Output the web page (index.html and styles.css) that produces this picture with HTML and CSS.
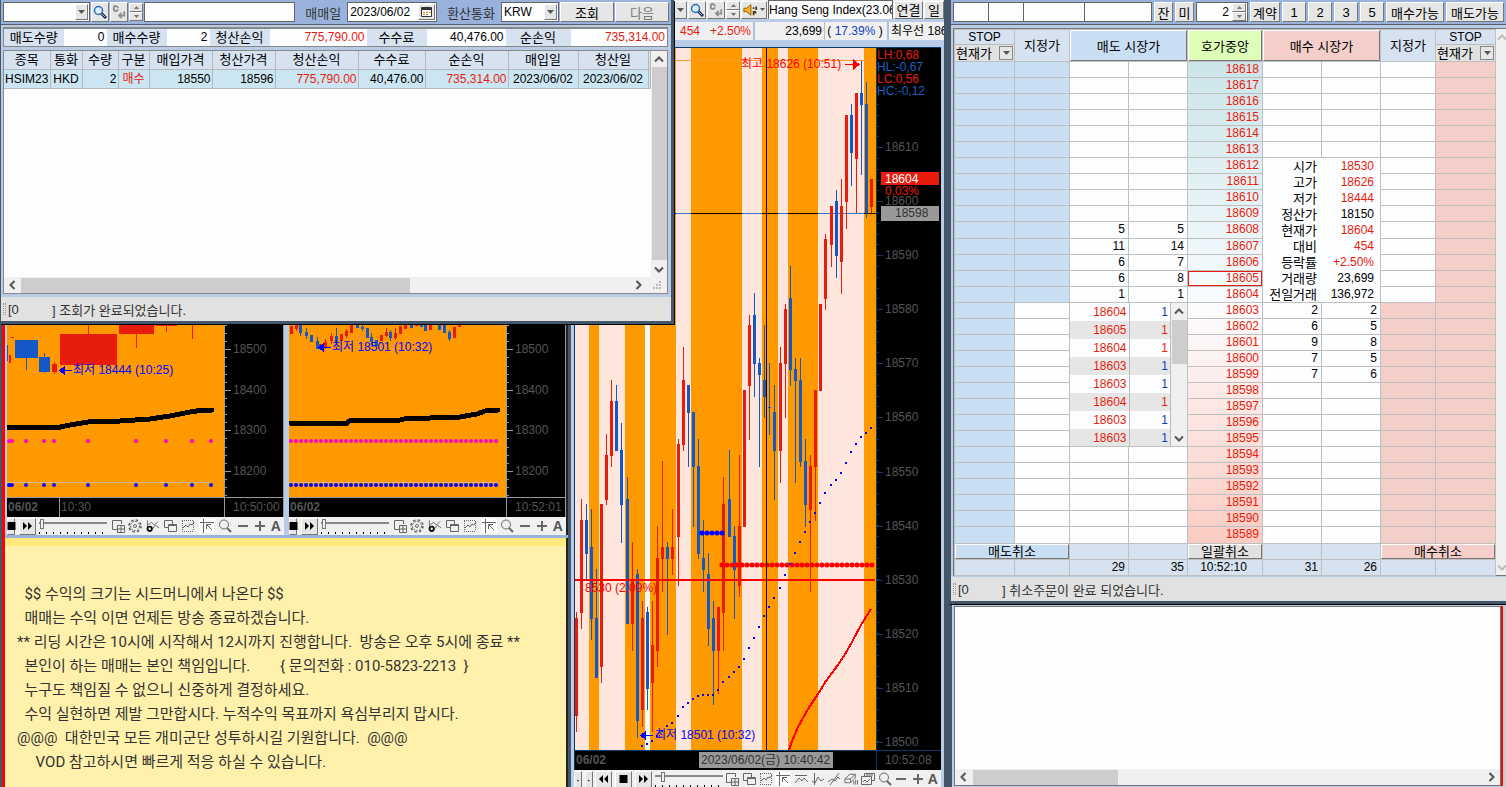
FILE: index.html
```html
<!DOCTYPE html>
<html lang="ko">

<head>
    <meta charset="UTF-8" />
    <meta name="viewport" content="width=device-width, initial-scale=1.0" />
    <title>해외선물 주문</title>
    <link rel="stylesheet" href="styles.css">
</head>

<body>
    <svg class="sprite" aria-hidden="true">
        <symbol id="i-down" viewBox="0 0 7 4"><path d="M0 0h7L3.5 4z" fill="currentColor" /></symbol>
        <symbol id="i-up" viewBox="0 0 7 4"><path d="M0 4h7L3.5 0z" fill="currentColor" /></symbol>
        <symbol id="i-find" viewBox="0 0 14 14">
            <path d="M8 8l5 5" stroke="#0a2a6a" stroke-width="3" />
            <path d="M9 9l3 3" stroke="#e8c060" />
            <circle cx="5.5" cy="5.5" r="4" fill="#d8f0ff" stroke="#2f6fb5" stroke-width="1.5" />
        </symbol>
        <symbol id="i-enter" viewBox="0 0 16 16">
            <path d="M7 3.500Q6 1 4 1T2 4t2 3 3-2M14 7v5H8m3-3l-3 3 3 3" fill="none" stroke="#8c8c8c" stroke-width="2" />
        </symbol>
        <symbol id="i-sound" viewBox="0 0 17 14">
            <path d="M1 5h3l5-4v12L4 9H1z" fill="#f5b21c" stroke="#8a5a00" />
            <path d="M11 4h2v2h-2zm3-1h2v4h-2zM11 8h4v3h-2v2h-2z" fill="#5a3a10" />
        </symbol>
        <symbol id="i-cal" viewBox="0 0 11 10">
            <path d="M.5.5h10v9H.5z" fill="#fff" stroke="#333" />
            <path d="M1 2h9" stroke="#333" stroke-width="2" />
            <path d="M2 5.500h2m1 0h2m1 0h1.500M2 7.500h2m1 0h2" stroke="#e08a20" />
        </symbol>
        <symbol id="i-ff" viewBox="0 0 9 8"><path d="M0 0l4 4-4 4zM5 0l4 4-4 4z" /></symbol>
        <symbol id="i-rew" viewBox="0 0 9 8"><path d="M4 0L0 4l4 4zM9 0L5 4l4 4z" /></symbol>
        <symbol id="i-stop" viewBox="0 0 6 6"><path d="M0 0h6v6H0z" /></symbol>
        <symbol id="i-add" viewBox="0 0 14 14">
            <path d="M6 10.500H1.500v-9h9V5" />
            <path d="M6.500 6.500h7v7h-7zM10 7v6M7 10h6" />
        </symbol>
        <symbol id="i-gear" viewBox="0 0 14 14">
            <circle cx="7" cy="7" r="6" stroke-dasharray="2.500 2.200" stroke-width="1.600" />
            <circle cx="7" cy="7" r="4.500" stroke-dasharray="2 1" />
            <circle cx="7" cy="7" r="1.500" />
        </symbol>
        <symbol id="i-set" viewBox="0 0 15 14">
            <path d="M1.500 1v11M2 6l4-3 3 3 4-4M7 10l3-4 4 3" />
            <circle cx="4" cy="10" r="2.300" stroke="#111" stroke-width="2" />
        </symbol>
        <symbol id="i-wins" viewBox="0 0 14 14">
            <path d="M5 8.500H1.500v-7h8V5M5.500 5.500h8v7h-8zM5 6.500h9" />
        </symbol>
        <symbol id="i-dash" viewBox="0 0 14 14">
            <path d="M1 1.500h12M1 12.500h12M1.500 2v10M12.500 2v10" stroke-dasharray="1 1" />
            <path d="M2 9l3-3 2 2 2-3 2 1 2-3" />
        </symbol>
        <symbol id="i-cross" viewBox="0 0 14 14">
            <path d="M0 3.500h14M3.500 0v14M12 11L6.500 5.500M6.500 10V5.500H11" />
        </symbol>
        <symbol id="i-trend" viewBox="0 0 14 14"><path d="M1 3.500h12M1 11l4-5 3 3 2-3 4 4" /></symbol>
        <symbol id="i-wave" viewBox="0 0 14 14"><path d="M3.500 1v12M1 9l3 2 3-6 3 4 3-2" /></symbol>
        <symbol id="i-slash" viewBox="0 0 14 14"><path d="M3 13L12 1M1 10l4-3 3 2 3-4 2 2" /></symbol>
        <symbol id="i-erase" viewBox="0 0 15 14">
            <path d="M1 7l5-5h6L7 7zM1 7v4h6V7M7 11l5-5V2M10.500 9v4M12.500 8v5M14.500 8v5" />
        </symbol>
        <symbol id="i-multi" viewBox="0 0 14 14">
            <path d="M3.500 4V1.500h10v7H11M.5 4.500h10v8H.5zM2 10l2-2 2 2 3-3M5 3l2 0 2 0 3 0" />
        </symbol>
        <symbol id="i-lens" viewBox="0 0 14 14"><circle cx="6" cy="5.500" r="4.500" /><path d="M9 9l4 4" stroke-width="2" /></symbol>
        <symbol id="i-minus" viewBox="0 0 14 14"><path d="M2 7h10" stroke-width="2" /></symbol>
        <symbol id="i-plus" viewBox="0 0 14 14"><path d="M2 7h10M7 2v10" stroke-width="2" /></symbol>
    </svg>

    <main class="desktop">
        <div class="col-left">
            <section class="win query">
                <form class="bar">
                    <span class="combo acct"><input type="text" aria-label="계좌"><button type="button" class="btn dd" aria-label="목록"><svg><use href="#i-down" /></svg></button></span>
                    <button type="button" class="btn ico" aria-label="검색"><svg><use href="#i-find" /></svg></button>
                    <button type="button" class="btn ico" aria-label="입력"><svg><use href="#i-enter" /></svg></button>
                    <span class="spin"><button type="button" class="btn" aria-label="위"><svg><use href="#i-up" /></svg></button><button type="button" class="btn" aria-label="아래"><svg><use href="#i-down" /></svg></button></span>
                    <input type="text" class="box grow" aria-label="계좌명">
                    <label for="day">매매일</label>
                    <span class="combo day"><input type="text" id="day" value="2023/06/02"><button type="button" class="btn cal" aria-label="달력"><svg><use href="#i-cal" /></svg></button></span>
                    <label for="cur">환산통화</label>
                    <span class="combo cur"><select id="cur"><option>KRW</option></select><span class="btn dd"><svg><use href="#i-down" /></svg></span></span>
                    <button type="submit" class="btn wide">조회</button>
                    <button type="button" class="btn wide off">다음</button>
                </form>
                <div class="query-body">
                    <table class="summary">
                        <colgroup><col class="w60"><col class="w43"><col class="w60"><col class="w43"><col class="w60"><col class="w97"><col class="w60"><col class="w79"><col class="w65"><col class="w97"></colgroup>
                        <tr>
                            <th>매도수량</th><td>0</td>
                            <th>매수수량</th><td>2</td>
                            <th>청산손익</th><td class="up">775,790.00</td>
                            <th>수수료</th><td>40,476.00</td>
                            <th>순손익</th><td class="up">735,314.00</td>
                        </tr>
                    </table>
                    <div class="grid-box">
                        <div class="grid-main">
                            <table class="trades">
                                <colgroup><col class="w46"><col class="w32"><col class="w36"><col class="w31"><col class="w63"><col class="w63"><col class="w83"><col class="w67"><col class="w83"><col class="w70"><col class="w70"><col></colgroup>
                                <thead>
                                    <tr><th>종목</th><th>통화</th><th>수량</th><th>구분</th><th>매입가격</th><th>청산가격</th><th>청산손익</th><th>수수료</th><th>순손익</th><th>매입일</th><th>청산일</th><th></th></tr>
                                </thead>
                                <tbody>
                                    <tr><td class="mid">HSIM23</td><td class="mid">HKD</td><td>2</td><td class="mid up">매수</td><td>18550</td><td>18596</td><td class="up">775,790.00</td><td>40,476.00</td><td class="up">735,314.00</td><td class="mid">2023/06/02</td><td class="mid">2023/06/02</td><td></td></tr>
                                </tbody>
                            </table>
                            <div class="vbar"><svg class="chev" viewBox="0 0 8 5"><path d="M0 4.500l4-4 4 4" /></svg><i class="thumb"></i><svg class="chev" viewBox="0 0 8 5"><path d="M0 .5l4 4 4-4" /></svg></div>
                        </div>
                        <div class="hbar"><svg class="chev side" viewBox="0 0 5 8"><path d="M4.500 0l-4 4 4 4" /></svg><i class="thumb"></i><svg class="chev side" viewBox="0 0 5 8"><path d="M.5 0l4 4-4 4" /></svg><svg class="grip" viewBox="0 0 8 8"><path d="M6 0h2v2H6zM3 3h2v2H3zM6 3h2v2H6zM0 6h2v2H0zM3 6h2v2H3zM6 6h2v2H6z" /></svg></div>
                    </div>
                </div>
                <div class="status"><i></i><span>[0</span><span>] 조회가 완료되었습니다.</span></div>
            </section>

            <div class="mini-row">
                <section class="mini">
                    <svg class="chart" viewBox="7 323 277 193">
                        <rect class="back" x="7" y="323" width="277" height="193" />
                        <rect class="or" x="7" y="323" width="217" height="173" />
                        <path class="frame" d="M224.500 323V516M7 496.500H284M59.500 496V516M283.500 323V516" />
                        <path class="frame" d="M225 348.500h6M225 389.500h6M225 429.500h6M225 470.500h6" />
                        <path class="ticks" stroke-dasharray="1 7.100" d="M226 324V496" />
                        <g class="red">
                            <path class="fill" d="M9 354h2v8H9zM11 336h3v1h-3zM52 363h5v8h-5zM60 333h57v31H60zM119 323h35v10h-35zM156 323h21v2h-21z" />
                            <path d="M54.500 361v12M88.500 323v10M136.500 333v14M166.500 325v6M192.500 323v15" />
                        </g>
                        <g class="blue">
                            <path class="fill" d="M7 344h1v16H7zM15 339h23v18H15zM39 356h11v15H39z" />
                            <path d="M26.500 357v12M44.500 352v20" />
                        </g>
                        <path class="pale" d="M7 481.500H211" />
                        <path class="avg" d="M7 426.500H58L70 424 88 421 120 420 150 418 170 415 190 411 203 409H212" />
                        <path class="dots mag" d="M9 440h0M12 440h0M26 440h0M44 440h0M54 440h0M88 440h0M136 440h0M166 440h0M192 440h0M211 440h0" />
                        <path class="dots blu" d="M9 484h0M12 484h0M26 484h0M44 484h0M54 484h0M88 484h0M136 484h0M166 484h0M192 484h0M211 484h0" />
                        <path class="arrow" d="M59 369.500l6-5v4.500h7v1h-7v4.500z" />
                        <text class="low" x="73" y="373">최저 18444 (10:25)</text>
                        <text x="233" y="352">18500</text>
                        <text x="233" y="393">18400</text>
                        <text x="233" y="433">18300</text>
                        <text x="233" y="474">18200</text>
                        <text class="bold" x="8" y="510">06/02</text>
                        <text x="61" y="510">10:30</text>
                        <text x="233" y="510">10:50:00</text>
                    </svg>
                    <div class="tools">
                        <button class="btn half" aria-label="정지"><svg><use href="#i-stop" /></svg></button>
                        <button class="btn" aria-label="빨리"><svg><use href="#i-ff" /></svg></button>
                        <input type="range" value="2" aria-label="속도">
                        <svg><use href="#i-add" /></svg><svg><use href="#i-gear" /></svg><svg><use href="#i-set" /></svg><svg><use href="#i-wins" /></svg><svg><use href="#i-dash" /></svg><svg class="on"><use href="#i-cross" /></svg><svg><use href="#i-lens" /></svg><svg><use href="#i-minus" /></svg><svg><use href="#i-plus" /></svg><b>A</b>
                    </div>
                </section>
                <section class="mini">
                    <svg class="chart" viewBox="289 323 277 193">
                        <rect class="back" x="289" y="323" width="277" height="193" />
                        <rect class="or" x="289" y="323" width="217" height="173" />
                        <path class="frame" d="M506.500 323V516M289 496.500H566M565.500 323V516" />
                        <path class="frame" d="M507 348.500h6M507 389.500h6M507 429.500h6M507 470.500h6" />
                        <path class="ticks" stroke-dasharray="1 7.100" d="M508 324V496" />
                        <g class="red">
                            <path class="body" d="M291.500 325v8M296.500 323v5M320.500 343v4M325.500 341v5M331.500 335v5M341.500 333v7M346.500 330v5M351.500 323v9M381.500 334v6M386.500 331v4M395.500 332v5M400.500 325v8M405.500 323v5M416.500 323v2M430.500 323v6M454.500 326v11M459.500 323v3" />
                            <path d="M325.500 338v10M331.500 332v11M346.500 328v9M386.500 327v9M395.500 327v12M296.500 323v7" />
                        </g>
                        <g class="blue">
                            <path class="body" d="M300.500 323v9M306.500 331v4M311.500 334v7M317.500 340v8M336.500 335v7M357.500 323v4M362.500 326v2M367.500 327v10M371.500 336v5M376.500 339v6M390.500 331v6M411.500 323v4M421.500 323v3M425.500 323v7M439.500 323v6M444.500 324v8M449.500 331v7" />
                            <path d="M300.500 323v12M306.500 327v11M317.500 336v12M336.500 327v17M362.500 323v7M371.500 332v12M390.500 329v11M449.500 329v11" />
                        </g>
                        <path class="pale" d="M289 481.500H498" />
                        <path class="avg" d="M290 422H347L351 419H400L404 418 430 417 460 416 477 413 485 410 498 409" />
                        <path class="dots mag" stroke-dasharray="0 5" d="M291 440H499" />
                        <path class="dots blu" stroke-dasharray="0 5" d="M291 484H499" />
                        <path class="arrow" d="M318 346.500l6-5v4.500h7v1h-7v4.500z" />
                        <text class="low" x="332" y="350">최저 18501 (10:32)</text>
                        <text x="515" y="352">18500</text>
                        <text x="515" y="393">18400</text>
                        <text x="515" y="433">18300</text>
                        <text x="515" y="474">18200</text>
                        <text class="bold" x="290" y="510">06/02</text>
                        <text x="515" y="510">10:52:01</text>
                    </svg>
                    <div class="tools">
                        <button class="btn half" aria-label="정지"><svg><use href="#i-stop" /></svg></button>
                        <button class="btn" aria-label="빨리"><svg><use href="#i-ff" /></svg></button>
                        <input type="range" value="2" aria-label="속도">
                        <svg><use href="#i-add" /></svg><svg><use href="#i-gear" /></svg><svg><use href="#i-set" /></svg><svg><use href="#i-wins" /></svg><svg><use href="#i-dash" /></svg><svg class="on"><use href="#i-cross" /></svg><svg><use href="#i-lens" /></svg><svg><use href="#i-minus" /></svg><svg><use href="#i-plus" /></svg><b>A</b>
                    </div>
                </section>
            </div>

            <section class="note">
                <div class="note-text">  $$ 수익의 크기는 시드머니에서 나온다 $$
  매매는 수익 이면 언제든 방송 종료하겠습니다.
** 리딩 시간은 10시에 시작해서 12시까지 진행합니다.  방송은 오후 5시에 종료 **
  본인이 하는 매매는 본인 책임입니다.        { 문의전화 : 010-5823-2213  }
  누구도 책임질 수 없으니 신중하게 결정하세요.
  수익 실현하면 제발 그만합시다. 누적수익 목표까지 욕심부리지 맙시다.
@@@  대한민국 모든 개미군단 성투하시길 기원합니다.  @@@
     VOD 참고하시면 빠르게 적응 하실 수 있습니다.</div>
            </section>
        </div>

        <section class="win center">
            <div class="sym">
                <button class="btn dd" aria-label="목록"><svg><use href="#i-down" /></svg></button>
                <button class="btn ico" aria-label="검색"><svg><use href="#i-find" /></svg></button>
                <button class="btn ico" aria-label="입력"><svg><use href="#i-enter" /></svg></button>
                <span class="spin"><button class="btn" aria-label="위"><svg><use href="#i-up" /></svg></button><button class="btn" aria-label="아래"><svg><use href="#i-down" /></svg></button></span>
                <button class="btn snd" aria-label="소리"><svg><use href="#i-sound" /></svg><svg class="tiny"><use href="#i-down" /></svg></button>
                <input type="text" class="box grow" value="Hang Seng Index(23.06)" aria-label="종목명">
                <button class="btn link">연결</button>
                <button class="btn day1">일</button>
            </div>
            <div class="quote">
                <span class="q1 up">454</span><span class="q2 up">+2.50%</span><span class="q3">23,699</span><span class="q4">( <em>17.39%</em> )</span><span class="q5">최우선 18604</span>
            </div>
            <div class="chart-wrap">
                <svg class="chart main" viewBox="574 47 367 723">
                    <rect class="back" x="574" y="47" width="367" height="723" />
                    <rect class="cream" x="574" y="47" width="302" height="703" />
                    <path class="or" d="M589 47h10v703h-10zM625 47h51v703h-51zM691 47h51v703h-51zM762 47h16v703h-16zM788 47h30v703h-30zM864 47h12v703h-12z" />
                    <path fill="#eefafa" d="M645 47h5v703h-5z" />
                    <path stroke="#ff9933" d="M574 60.500H876" />
                    <path stroke="#200000" d="M574 213.500H876" />
                    <path stroke="#3c78c8" d="M676 213.500h15M742 213.500h20M778 213.500h10M818 213.500h46" />
                    <g class="red" transform="translate(.5 0)">
                        <path d="M576 612V732M581 499V629M601 504V683M606 434V505M611 380V467M632 542V651M642 601V727M652 601V732M657 526V667M662 461V592M672 509V575M678 439V586M683 347V451M718 607V694M723 477V651M739 455V597M749 315V440M780 347V483M785 304V418M810 455V592M815 390V521M825 234V310M831 206V267M841 179V294M846 115V229M856 93V213M871 179V213" />
                        <path class="body" d="M576 618V716M581 520V613M601 504V667M606 455V500M611 401V456M632 580V624M642 618V710M652 645V683M657 558V651M662 547V559M672 547V559M678 444V537M683 380V445M718 607V651M723 504V613M739 526V586M744 390V527M749 325V386M780 363V451M785 309V364M810 466V510M815 390V467M820 304V391M825 239V299M831 206V245M841 206V262M846 115V202M856 93V159M871 179V207" />
                    </g>
                    <g class="blue" transform="translate(.5 0)">
                        <path d="M586 504V580M591 509V640M596 569V678M616 385V451M621 423V543M627 477V624M637 569V738M647 607V710M667 542V635M688 385V467M693 412V527M698 439V559M703 520V592M708 553V646M713 601V705M729 450V537M734 526V619M754 293V397M759 358V467M764 325V418M769 363V435M774 385V500M790 266V386M795 358V483M800 358V467M805 439V527M836 190V278M851 104V186M861 61V175M866 82V218" />
                        <path class="body" d="M586 520V554M591 547V619M596 618V678M616 401V451M621 450V505M627 499V624M637 574V721M647 612V689M667 547V559M688 385V413M693 412V467M698 466V554M703 558V570M708 574V629M713 618V651M729 499V537M734 536V570M754 315V364M759 363V375M764 380V397M769 407V408M774 412V451M790 298V370M795 369V381M800 380V462M805 461V505M836 201V256M851 115V153M861 93V105M866 104V213" />
                    </g>
                    <path class="dots blu" stroke-dasharray="0 5" d="M702 533H723" />
                    <path class="dots rd" stroke-dasharray="0 5" d="M722 565H874" />
                    <path stroke="#f00" stroke-width="2" d="M574 580H875" />
                    <path stroke="#200000" d="M766.500 47V750" />
                    <path class="trail" d="M642 746h0M647 744h0M652 741h0M657 736h0M662 731h0M667 726h0M672 723h0M678 716h0M683 707h0M688 703h0M693 699h0M698 696h0M703 695h0M708 695h0M713 695h0M718 690h0M723 682h0M729 677h0M734 672h0M739 667h0M744 659h0M749 648h0M754 638h0M759 627h0M764 616h0M769 607h0M774 598h0M780 588h0M785 575h0M790 564h0M795 553h0M800 542h0M805 532h0M810 522h0M815 513h0M820 503h0M825 493h0M831 485h0M836 480h0M841 473h0M846 463h0M851 452h0M856 444h0M861 437h0M866 433h0M871 428h0" />
                    <path fill="none" stroke="#f00" stroke-width="2" d="M789 750L792 741 798 727 808 709 818 694 826 681 835 669 844 656 852 642 861 625 871 609" />
                    <path class="nav" d="M876.500 47V770M574 750.500H941M574.500 47V770M574 47.500H941" />
                    <path class="nav" d="M877 147.500h6M877 201.500h6M877 255.500h6M877 309.500h6M877 363.500h6M877 417.500h6M877 472.500h6M877 526.500h6M877 580.500h6M877 634.500h6M877 688.500h6M877 742.500h6" />
                    <path class="nav" stroke-width="2" stroke-dasharray="1 9.800" d="M878 104V750" />
                    <path fill="#f00" d="M845 64h8v-5l7 5.500-7 5.500v-5h-8z" />
                    <path class="arrow" d="M640 735.500l6-5v4.500h7v1h-7v4.500z" />
                    <text class="high" x="741" y="68">최고 18626 (10:51)</text>
                    <text class="low" x="655" y="739">최저 18501 (10:32)</text>
                    <text class="high" x="585" y="592">8530 (2,09%)</text>
                    <text class="rtx" x="877" y="59">LH:0,68</text>
                    <text class="btx" x="877" y="71">HL:-0,67</text>
                    <text class="rtx" x="877" y="83">LC:0,56</text>
                    <text class="btx" x="877" y="95">HC:-0,12</text>
                    <text x="885" y="151">18610</text>
                    <text x="885" y="205">18600</text>
                    <text x="885" y="259">18590</text>
                    <text x="885" y="313">18580</text>
                    <text x="885" y="367">18570</text>
                    <text x="885" y="421">18560</text>
                    <text x="885" y="476">18550</text>
                    <text x="885" y="530">18540</text>
                    <text x="885" y="584">18530</text>
                    <text x="885" y="638">18520</text>
                    <text x="885" y="692">18510</text>
                    <text x="885" y="746">18500</text>
                    <rect x="881" y="172" width="58" height="13" fill="#e81c0c" />
                    <text class="wtx" x="885" y="183">18604</text>
                    <rect x="884" y="185" width="55" height="11" />
                    <text class="rtx" x="885" y="195">0,03%</text>
                    <rect x="881" y="206" width="58" height="15" fill="#999" />
                    <text class="dtx" x="895" y="217">18598</text>
                    <text class="bold" x="576" y="764">06/02</text>
                    <rect x="699" y="752" width="134" height="16" fill="#999" />
                    <text class="dtx" x="701" y="764">2023/06/02(금) 10:40:42</text>
                    <text x="885" y="764">10:52:08</text>
                </svg>
                <div class="tools">
                    <button class="btn bit" aria-label="처음">·</button><button class="btn bit" aria-label="이전">·</button>
                    <button class="btn" aria-label="뒤로"><svg><use href="#i-rew" /></svg></button>
                    <button class="btn" aria-label="정지"><svg><use href="#i-stop" /></svg></button>
                    <button class="btn" aria-label="빨리"><svg><use href="#i-ff" /></svg></button>
                    <input type="range" value="10" aria-label="속도">
                    <svg><use href="#i-add" /></svg><svg><use href="#i-wins" /></svg><svg><use href="#i-dash" /></svg><svg class="on"><use href="#i-cross" /></svg><svg><use href="#i-trend" /></svg><svg><use href="#i-wave" /></svg><svg><use href="#i-slash" /></svg><svg><use href="#i-erase" /></svg><svg><use href="#i-multi" /></svg><svg><use href="#i-lens" /></svg><svg><use href="#i-minus" /></svg><svg><use href="#i-plus" /></svg><b>A</b>
                </div>
            </div>
        </section>

        <div class="col-right">
            <section class="win order">
                <form class="bar">
                    <span class="cells"><input type="text" class="box" aria-label="종목"><input type="text" class="box" aria-label="구분"><input type="text" class="box c3" aria-label="평균가"><input type="text" class="box c4" aria-label="손익"></span>
                    <button type="button" class="btn sq">잔</button>
                    <button type="button" class="btn sq">미</button>
                    <span class="combo qty"><input type="text" value="2" aria-label="수량"><span class="spin"><button type="button" class="btn" aria-label="증가"><svg><use href="#i-up" /></svg></button><button type="button" class="btn" aria-label="감소"><svg><use href="#i-down" /></svg></button></span></span>
                    <button type="button" class="btn unit">계약</button>
                    <button type="button" class="btn num">1</button>
                    <button type="button" class="btn num">2</button>
                    <button type="button" class="btn num">3</button>
                    <button type="button" class="btn num">5</button>
                    <button type="button" class="btn able">매수가능</button>
                    <button type="button" class="btn able">매도가능</button>
                </form>
                <div class="ladder-wrap">
                    <table class="ladder">
                        <colgroup><col class="w60"><col class="w55"><col class="w59"><col class="w59"><col class="w75 price"><col class="w59"><col class="w59"><col class="w55"><col class="w60"></colgroup>
                        <thead>
                            <tr>
                                <th class="stop"><div>STOP</div><span><select aria-label="매도 기준"><option>현재가</option></select><i class="btn"><svg><use href="#i-down" /></svg></i></span></th>
                                <th>지정가</th>
                                <th colspan="2" class="key"><button class="sell">매도 시장가</button></th>
                                <th class="key"><button class="mid">호가중앙</button></th>
                                <th colspan="2" class="key"><button class="buy">매수 시장가</button></th>
                                <th>지정가</th>
                                <th class="stop"><div>STOP</div><span><select aria-label="매수 기준"><option>현재가</option></select><i class="btn"><svg><use href="#i-down" /></svg></i></span></th>
                            </tr>
                        </thead>
                        <tbody class="asks">
                            <tr><td></td><td></td><td></td><td></td><td>18618</td><td></td><td></td><td></td><td></td></tr>
                            <tr><td></td><td></td><td></td><td></td><td>18617</td><td></td><td></td><td></td><td></td></tr>
                            <tr><td></td><td></td><td></td><td></td><td>18616</td><td></td><td></td><td></td><td></td></tr>
                            <tr><td></td><td></td><td></td><td></td><td>18615</td><td></td><td></td><td></td><td></td></tr>
                            <tr><td></td><td></td><td></td><td></td><td>18614</td><td></td><td></td><td></td><td></td></tr>
                            <tr><td></td><td></td><td></td><td></td><td>18613</td><td></td><td></td><td></td><td></td></tr>
                            <tr><td></td><td></td><td></td><td></td><td>18612</td>
                                <td colspan="2" rowspan="9" class="nest">
                                    <table class="info">
                                        <tr><th>시가</th><td class="up">18530</td></tr>
                                        <tr><th>고가</th><td class="up">18626</td></tr>
                                        <tr><th>저가</th><td class="up">18444</td></tr>
                                        <tr><th>정산가</th><td>18150</td></tr>
                                        <tr><th>현재가</th><td class="up">18604</td></tr>
                                        <tr><th>대비</th><td class="up">454</td></tr>
                                        <tr><th>등락률</th><td class="up">+2.50%</td></tr>
                                        <tr><th>거래량</th><td>23,699</td></tr>
                                        <tr><th>전일거래</th><td>136,972</td></tr>
                                    </table>
                                </td>
                                <td></td><td class="pink"></td></tr>
                            <tr><td></td><td></td><td></td><td></td><td>18611</td><td></td><td class="pink"></td></tr>
                            <tr><td></td><td></td><td></td><td></td><td>18610</td><td></td><td class="pink"></td></tr>
                            <tr><td></td><td></td><td></td><td></td><td>18609</td><td></td><td class="pink"></td></tr>
                            <tr><td></td><td></td><td>5</td><td>5</td><td>18608</td><td></td><td class="pink"></td></tr>
                            <tr><td></td><td></td><td>11</td><td>14</td><td>18607</td><td></td><td class="pink"></td></tr>
                            <tr><td></td><td></td><td>6</td><td>7</td><td>18606</td><td></td><td class="pink"></td></tr>
                            <tr><td></td><td></td><td>6</td><td>8</td><td class="last">18605</td><td></td><td class="pink"></td></tr>
                            <tr><td></td><td></td><td>1</td><td>1</td><td>18604</td><td></td><td class="pink"></td></tr>
                        </tbody>
                        <tbody class="bids">
                            <tr><td></td><td></td>
                                <td colspan="2" rowspan="9" class="nest">
                                    <div class="fills">
                                        <table>
                                            <tr><td>18604</td><td class="dn">1</td></tr>
                                            <tr><td>18605</td><td>1</td></tr>
                                            <tr><td>18604</td><td>1</td></tr>
                                            <tr><td>18603</td><td class="dn">1</td></tr>
                                            <tr><td>18603</td><td class="dn">1</td></tr>
                                            <tr><td>18604</td><td>1</td></tr>
                                            <tr><td>18603</td><td class="dn">1</td></tr>
                                            <tr><td>18603</td><td class="dn">1</td></tr>
                                        </table>
                                        <div class="vbar"><svg class="chev" viewBox="0 0 8 5"><path d="M0 4.500l4-4 4 4" /></svg><i class="thumb"></i><svg class="chev" viewBox="0 0 8 5"><path d="M0 .5l4 4 4-4" /></svg></div>
                                    </div>
                                </td>
                                <td class="up">18603</td><td>2</td><td>2</td><td class="pink"></td><td class="pink"></td></tr>
                            <tr><td></td><td></td><td class="up">18602</td><td>6</td><td>5</td><td class="pink"></td><td class="pink"></td></tr>
                            <tr><td></td><td></td><td class="up">18601</td><td>9</td><td>8</td><td class="pink"></td><td class="pink"></td></tr>
                            <tr><td></td><td></td><td class="up">18600</td><td>7</td><td>5</td><td class="pink"></td><td class="pink"></td></tr>
                            <tr><td></td><td></td><td class="up">18599</td><td>7</td><td>6</td><td class="pink"></td><td class="pink"></td></tr>
                            <tr><td></td><td></td><td class="up">18598</td><td></td><td></td><td class="pink"></td><td class="pink"></td></tr>
                            <tr><td></td><td></td><td class="up">18597</td><td></td><td></td><td class="pink"></td><td class="pink"></td></tr>
                            <tr><td></td><td></td><td class="up">18596</td><td></td><td></td><td class="pink"></td><td class="pink"></td></tr>
                            <tr><td></td><td></td><td class="up">18595</td><td></td><td></td><td class="pink"></td><td class="pink"></td></tr>
                            <tr><td></td><td></td><td></td><td></td><td class="up">18594</td><td></td><td></td><td class="pink"></td><td class="pink"></td></tr>
                            <tr><td></td><td></td><td></td><td></td><td class="up">18593</td><td></td><td></td><td class="pink"></td><td class="pink"></td></tr>
                            <tr><td></td><td></td><td></td><td></td><td class="up">18592</td><td></td><td></td><td class="pink"></td><td class="pink"></td></tr>
                            <tr><td></td><td></td><td></td><td></td><td class="up">18591</td><td></td><td></td><td class="pink"></td><td class="pink"></td></tr>
                            <tr><td></td><td></td><td></td><td></td><td class="up">18590</td><td></td><td></td><td class="pink"></td><td class="pink"></td></tr>
                            <tr><td></td><td></td><td></td><td></td><td class="up">18589</td><td></td><td></td><td class="pink"></td><td class="pink"></td></tr>
                        </tbody>
                        <tfoot>
                            <tr><td colspan="2" class="key"><button class="sell">매도취소</button></td><td></td><td></td><td class="key"><button class="all">일괄취소</button></td><td></td><td></td><td colspan="2" class="key"><button class="buy">매수취소</button></td></tr>
                            <tr><td></td><td></td><td>29</td><td>35</td><td class="time">10:52:10</td><td>31</td><td>26</td><td></td><td></td></tr>
                        </tfoot>
                    </table>
                    <div class="vbar dim"><svg class="chev" viewBox="0 0 8 5"><path d="M0 4.500l4-4 4 4" /></svg><svg class="chev" viewBox="0 0 8 5"><path d="M0 .5l4 4 4-4" /></svg></div>
                </div>
                <div class="status"><i></i><span>[0</span><span>] 취소주문이 완료 되었습니다.</span></div>
            </section>
            <section class="win blank">
                <div class="blank-in">
                    <div class="paper"></div>
                    <div class="hbar"><svg class="chev side" viewBox="0 0 5 8"><path d="M4.500 0l-4 4 4 4" /></svg><i class="thumb"></i><svg class="chev side" viewBox="0 0 5 8"><path d="M.5 0l4 4-4 4" /></svg></div>
                </div>
                <div class="edge"></div>
            </section>
        </div>
    </main>
</body>

</html>
```
FILE: styles.css
```css
* {
    box-sizing: border-box;
}

html,
body {
    margin: 0;
    height: 100%;
    overflow: hidden;
    background: #43566a;
}

body,
button,
input,
select {
    font-family: "Liberation Sans", "Noto Sans CJK KR", sans-serif;
    font-size: 12px;
    color: #000;
}

button,
label,
th,
.stop select,
.status {
    font-size: 13px;
}

button,
input,
select {
    margin: 0;
    padding: 0;
    border: 0;
    border-radius: 0;
}

table {
    border-collapse: collapse;
    table-layout: fixed;
    width: 100%;
}

th,
td {
    padding: 0;
    font-weight: normal;
    white-space: nowrap;
}

.sprite {
    display: none;
}

.up {
    color: #e81c0c;
}

.dn {
    color: #1040c0;
}

.w31 { width: 31px; }
.w32 { width: 32px; }
.w36 { width: 36px; }
.w43 { width: 43px; }
.w46 { width: 46px; }
.w55 { width: 55px; }
.w59 { width: 59px; }
.w60 { width: 60px; }
.w63 { width: 63px; }
.w65 { width: 65px; }
.w67 { width: 67px; }
.w70 { width: 70px; }
.w75 { width: 75px; }
.w79 { width: 79px; }
.w83 { width: 83px; }
.w97 { width: 97px; }

/* desktop */
.desktop {
    display: grid;
    grid-template-columns: minmax(0, 568fr) minmax(0, 380fr) minmax(0, 558fr);
    min-height: 100vh;
}

.col-left,
.col-right {
    display: flex;
    flex-direction: column;
    min-width: 0;
}

.win {
    background: #b8cce8;
}

/* shared controls */
.bar {
    display: flex;
    align-items: center;
    gap: 1px;
    height: 25px;
    padding: 0 2px;
    background: #99b2dc;
    border-bottom: 1px solid #5c5f68;
}

.bar label {
    padding: 0 5px 0 9px;
    color: #333;
    white-space: nowrap;
}

.btn {
    display: flex;
    align-items: center;
    justify-content: center;
    flex: none;
    height: 20px;
    background: #e6e6e6;
    border: 1px solid;
    border-color: #fff #777 #777 #fff;
    white-space: nowrap;
}

.btn svg {
    width: 7px;
    height: 4px;
    color: #555;
}

.btn.ico {
    width: 18px;
}

.btn.ico svg {
    width: 14px;
    height: 14px;
}

.btn.dd {
    width: 13px;
    height: 16px;
}

.btn.cal {
    width: 17px;
    height: 16px;
}

.btn.cal svg {
    width: 11px;
    height: 10px;
}

.btn.wide {
    width: 54px;
}

.btn.off {
    color: #777;
}

.box,
.combo {
    height: 20px;
    background: #fcfdff;
    border: 1px solid #666;
    min-width: 0;
}

.grow {
    flex: 1;
}

.combo {
    display: flex;
    align-items: center;
    flex: none;
    padding-right: 1px;
}

.combo input,
.combo select {
    flex: 1;
    min-width: 0;
    width: 0;
    height: 100%;
    padding-left: 2px;
    background: none;
    appearance: none;
}

.acct { width: 87px; }
.day { width: 90px; }
.cur { width: 58px; }

.spin {
    display: flex;
    flex-direction: column;
    width: 14px;
    flex: none;
}

.spin .btn {
    height: 9px;
}

.spin svg {
    height: 3px;
    color: #777;
}

/* scroll bars */
.vbar,
.hbar {
    display: flex;
    align-items: center;
    background: #f0f0f0;
    flex: none;
}

.vbar {
    flex-direction: column;
    width: 16px;
    padding: 6px 0 5px;
}

.hbar {
    height: 16px;
    padding: 0 6px;
}

.chev {
    width: 8px;
    height: 5px;
    fill: none;
    stroke: #555;
    stroke-width: 2;
    overflow: visible;
    flex: none;
}

.chev.side {
    width: 5px;
    height: 8px;
}

.thumb {
    background: #cdcdcd;
}

.grip {
    width: 8px;
    height: 8px;
    fill: #bbb;
    margin-left: 12px;
}

.status {
    display: flex;
    align-items: center;
    height: 24px;
    background: #e1e1e1;
    color: #333;
}

.status i {
    width: 3px;
    height: 12px;
    margin-left: 2px;
    border: 1px dotted #999;
    border-width: 0 1px;
}

.status span {
    width: 44px;
    padding-left: 2px;
    white-space: nowrap;
}

/* settlement query, lies over the chart to its right */
.query {
    position: relative;
    z-index: 2;
    margin-right: -106px;
    border: solid #43566a;
    border-width: 0 3px 3px 1px;
    box-shadow: 1px 1px 0 #000;
}

.query-body {
    padding: 2px 3px 3px 2px;
    background: #b8cce8;
}

.summary {
    height: 20px;
    margin-bottom: 3px;
    border: 1px solid #888;
    border-top-width: 2px;
    line-height: 17px;
}

.summary th {
    background: #d7e2f0;
}

.summary td {
    background: #fcfdff;
    text-align: right;
    padding-right: 2px;
}

.grid-box {
    border: 1px solid #888;
    background: #fcfdff;
}

.grid-main {
    display: flex;
    align-items: flex-start;
}

.trades {
    flex: 1;
    width: 0;
    line-height: 18px;
}

.trades th {
    background: #d7e2f0;
}

.trades th,
.trades td {
    border: solid #b8b8b8;
    border-width: 0 1px 1px 0;
}

.trades td {
    background: #cbe6f2;
    text-align: right;
    padding-right: 1px;
}

.trades td.mid {
    text-align: center;
    padding: 0;
}

.grid-main .vbar {
    height: 226px;
}

.grid-main .thumb {
    width: 15px;
    height: 193px;
    margin: 5px 0 auto;
}

.query .hbar .thumb {
    width: 389px;
    height: 15px;
    margin: 0 auto 0 6px;
}

/* small charts */
.mini-row {
    display: grid;
    grid-template-columns: 1fr 1fr;
    gap: 5px;
    padding: 0 2px 3px 2px;
    background: #b8cce8;
    border: solid #f00;
    border-width: 0 0 0 3px;
    box-shadow: inset 0 -3px 0 #99b2dc, inset -2px 0 0 #222;
    margin-left: 2px;
}

.mini {
    min-width: 0;
}

.chart {
    display: block;
    width: 100%;
    height: auto;
    shape-rendering: crispEdges;
}

.chart text {
    font-size: 12px;
    fill: #555;
}

.chart .bold {
    font-weight: bold;
}

.chart .low { fill: #00f; }
.chart .high { fill: #f00; }
.chart .rtx { fill: #e81c0c; }
.chart .btx { fill: #1860c8; }
.chart .wtx { fill: #fff; }
.chart .dtx { fill: #333; }

.back { fill: #000; }
.or { fill: #ff9900; }
.cream { fill: #ffe6dc; }

.frame {
    fill: none;
    stroke: #999;
}

.nav {
    fill: none;
    stroke: #0a3a6a;
}

.ticks {
    stroke: #999;
    stroke-width: 2;
}

.pale {
    stroke: #d8b890;
}

.red { stroke: #e81c0c; }
.blue { stroke: #1458c8; }
.red .fill { fill: #e81c0c; stroke: none; }
.blue .fill { fill: #1458c8; stroke: none; }

.body {
    stroke-width: 3;
}

.avg {
    fill: none;
    stroke: #000;
    stroke-width: 5;
    stroke-linecap: round;
}

.dots {
    stroke-width: 4;
    stroke-linecap: round;
    shape-rendering: auto;
}

.mag { stroke: #f0c; }
.blu { stroke: #00f; }
.main .dots { stroke-width: 5; }
.rd { stroke: #f00; }

.trail {
    stroke: #00f;
    stroke-width: 2;
    stroke-linecap: square;
}

.arrow {
    fill: #00f;
}

.tools {
    display: flex;
    align-items: center;
    justify-content: space-between;
    height: 18px;
    padding-right: 3px;
    background: #f0f0f0;
}

.tools .btn {
    width: 17px;
    height: 17px;
}

.tools .btn svg {
    width: 9px;
    height: 8px;
    fill: #000;
    stroke: none;
}

.tools .btn.half,
.tools .btn.bit {
    width: 8px;
}

.tools svg {
    width: 14px;
    height: 14px;
    fill: none;
    stroke: #666;
    flex: none;
}

.tools svg.on {
    width: 16px;
    background: #fff;
}

.tools b {
    font: bold 14px "Liberation Sans", sans-serif;
    color: #555;
}

.tools input {
    appearance: none;
    width: 68px;
    height: 16px;
    background: linear-gradient(#888, #888) 0 4px / 100% 2px no-repeat,
        repeating-linear-gradient(90deg, #000 0 1px, transparent 1px 7px) 0 14px / 100% 2px no-repeat;
}

.tools input::-webkit-slider-thumb {
    appearance: none;
    width: 4px;
    height: 10px;
    margin-top: -4px;
    background: #f0f0f0;
    border: 1px solid #777;
}

/* sticky note */
.note {
    flex: 1;
    background: linear-gradient(#ffe97f 8px, #fff1ab 8px);
    border: solid #f00;
    border-width: 0 0 0 3px;
    box-shadow: inset -2px 0 0 #222;
    margin-left: 2px;
}

.note-text {
    padding: 44px 0 0 12px;
    font: 15px/24px Roboto, "Noto Sans CJK KR", sans-serif;
    color: #333;
    white-space: pre;
}

/* index chart */
.center {
    display: flex;
    flex-direction: column;
    border: solid #43566a;
    border-width: 0 4px 0 3px;
    min-width: 0;
}

.sym,
.quote {
    display: flex;
    align-items: center;
    margin-left: 103px;
    overflow: hidden;
}

.sym {
    gap: 1px;
    height: 19px;
    background: #f0f0f0;
}

.sym .btn {
    height: 18px;
}

.sym .spin .btn {
    height: 9px;
}

.btn.snd {
    width: 26px;
    gap: 2px;
}

.btn.snd svg {
    width: 15px;
    height: 14px;
}

.btn.snd .tiny {
    width: 5px;
    height: 3px;
}

.btn.link { width: 29px; }
.btn.day1 { width: 20px; }

.quote {
    height: 18px;
    margin-top: 3px;
    background: #f0f0f0;
    white-space: nowrap;
}

.quote span {
    line-height: 18px;
    padding-right: 2px;
    text-align: right;
    flex: none;
}

.quote .q1 { width: 28px; }
.quote .q2 { width: 53px; border-right: 2px solid #aebfdc; }
.quote .q3 { width: 70px; border-right: 1px solid #bbb; }
.quote .q4 { width: 64px; border-right: 2px solid #aebfdc; text-align: center; }
.quote .q5 { width: 70px; text-align: left; padding-left: 2px; }

.quote em {
    font-style: normal;
    color: #1040c0;
}

.chart-wrap {
    margin-top: 7px;
    padding: 0 3px;
}

/* order window */
.order {
    border: solid #43566a;
    border-width: 0 0 3px 3px;
    overflow: hidden;
}

.order .bar {
    gap: 2px;
    overflow: hidden;
}

.cells {
    display: flex;
    flex: 1;
    min-width: 0;
}

.cells .box {
    flex: 35 1 0;
    border-right-width: 0;
}

.cells .c3 { flex-grow: 62; }
.cells .c4 { flex-grow: 68; border-right-width: 1px; }

.btn.sq { width: 19px; }
.btn.unit { width: 30px; }
.btn.num { width: 24px; }
.btn.able { width: 58px; }

.qty { width: 52px; }
.qty input { text-align: right; padding-right: 3px; }

.ladder-wrap {
    display: flex;
    margin: 3px 0 1px 2px;
    border: 1px solid #777;
    border-right: 0;
}

.ladder {
    flex: 1;
    width: 0;
    line-height: 15px;
    background: #fcfdff;
}

.ladder > * > tr > td,
.ladder > * > tr > th {
    border: 1px solid #bfbfbf;
}

.ladder .price {
    background: linear-gradient(#cce5e9 34px, #f8fcff 272px, #fdfdff 273px, #fbccc3 512px);
}

.ladder thead th {
    height: 32px;
    background: #d7e2f0;
}

.ladder thead tr {
    border-bottom: 1px solid #555;
}

.stop div {
    height: 15px;
    font-size: 12px;
    line-height: 15px;
    border-bottom: 1px solid #bbb;
}

.stop span {
    display: flex;
    height: 16px;
    background: #e1e1e1;
    align-items: center;
    padding-right: 1px;
}

.stop select {
    appearance: none;
    flex: 1;
    width: 0;
    background: none;
    padding-left: 1px;
    line-height: 15px;
}

.stop .btn {
    width: 14px;
    height: 14px;
    border-color: #888;
}

.ladder .key button {
    display: block;
    width: 100%;
    height: 31px;
    border: 1px solid;
    border-color: #fff #777 #777 #fff;
}

.ladder tfoot .key button {
    height: 15px;
    line-height: 13px;
}

.sell { background: #c8def2; }
.buy { background: #f4cfca; }
.mid { background: #ddffb8; }
.trades .mid { background: #cbe6f2; }
.all { background: #e1e1e1; }

.ladder tbody td {
    height: 16px;
    text-align: right;
    padding-right: 3px;
}

.ladder > tbody > tr > td:first-child,
.asks > tr > td:nth-child(2) {
    background: #c8def2;
}

.asks > tr > td:nth-child(5) {
    color: #e81c0c;
}

.asks > tr > td:nth-child(9),
.ladder .pink {
    background: #f4cfca;
}

.bids {
    border-top: 1px solid #888;
}

.ladder .last {
    box-shadow: inset 0 0 0 1px #e81c0c;
}

.ladder td.nest {
    padding: 0;
    vertical-align: top;
    background: #fcfdff;
}

.info th,
.info td {
    line-height: 15px;
    text-align: right;
}

.info th {
    width: 54px;
}

.ladder .info td {
    padding-right: 6px;
}

.fills {
    display: flex;
    height: 143px;
    overflow: hidden;
}

.fills table {
    flex: 1;
    width: 0;
}

.ladder .fills td {
    height: 18px;
    line-height: 16px;
    padding-right: 2px;
    border-right: 1px solid #bbb;
    color: #e81c0c;
}

.ladder .fills td.dn {
    color: #1040c0;
}

.ladder .fills td:first-child {
    width: 59px;
    background: none;
}

.fills tr:nth-child(even) {
    background: #e6e6e6;
}

.fills .thumb {
    width: 15px;
    height: 44px;
    margin: 6px 0 auto;
}

.ladder tfoot tr:first-child {
    border-top: 1px solid #555;
}

.ladder tfoot td {
    background: #d7e2f0;
    text-align: right;
    padding-right: 3px;
}

.ladder tfoot td.key {
    padding: 0;
}

.ladder tfoot td.time {
    text-align: center;
}

.vbar.dim {
    width: 11px;
    justify-content: space-between;
    overflow: hidden;
}

.vbar.dim .chev {
    stroke: #bbb;
}

/* lower right window */
.blank {
    display: flex;
    flex: 1;
    border-left: 4px solid #43566a;
    border-top: 1px solid #000;
    padding: 1px 0 2px 2px;
}

.blank-in {
    display: flex;
    flex-direction: column;
    flex: 1;
    border: 1px solid #777;
}

.paper {
    flex: 1;
    background: #fcfdff;
}

.blank .thumb {
    width: 145px;
    height: 15px;
    margin: 0 auto 0 7px;
}

.edge {
    width: 5px;
    border-left: 2px solid #f00;
    background: #ccc;
}
```
